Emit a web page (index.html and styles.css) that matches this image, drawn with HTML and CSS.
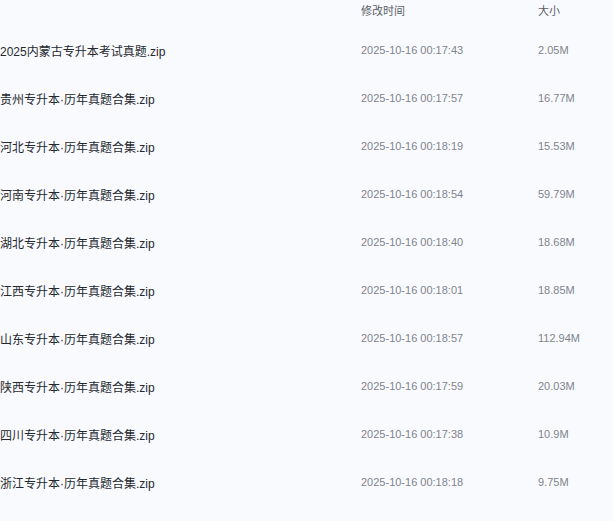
FILE: index.html
```html
<!DOCTYPE html>
<html lang="zh-CN">
<head>
<meta charset="utf-8">
<link rel="stylesheet" href="styles.css">
</head>
<body>
<div class="list">
  <div class="row head">
    <div class="name"></div>
    <div class="date">修改时间</div>
    <div class="size">大小</div>
  </div>
  <div class="row"><div class="name">2025内蒙古专升本考试真题.zip</div><div class="date">2025-10-16 00:17:43</div><div class="size">2.05M</div></div>
  <div class="row"><div class="name">贵州专升本·历年真题合集.zip</div><div class="date">2025-10-16 00:17:57</div><div class="size">16.77M</div></div>
  <div class="row"><div class="name">河北专升本·历年真题合集.zip</div><div class="date">2025-10-16 00:18:19</div><div class="size">15.53M</div></div>
  <div class="row"><div class="name">河南专升本·历年真题合集.zip</div><div class="date">2025-10-16 00:18:54</div><div class="size">59.79M</div></div>
  <div class="row"><div class="name">湖北专升本·历年真题合集.zip</div><div class="date">2025-10-16 00:18:40</div><div class="size">18.68M</div></div>
  <div class="row"><div class="name">江西专升本·历年真题合集.zip</div><div class="date">2025-10-16 00:18:01</div><div class="size">18.85M</div></div>
  <div class="row"><div class="name">山东专升本·历年真题合集.zip</div><div class="date">2025-10-16 00:18:57</div><div class="size">112.94M</div></div>
  <div class="row"><div class="name">陕西专升本·历年真题合集.zip</div><div class="date">2025-10-16 00:17:59</div><div class="size">20.03M</div></div>
  <div class="row"><div class="name">四川专升本·历年真题合集.zip</div><div class="date">2025-10-16 00:17:38</div><div class="size">10.9M</div></div>
  <div class="row"><div class="name">浙江专升本·历年真题合集.zip</div><div class="date">2025-10-16 00:18:18</div><div class="size">9.75M</div></div>
</div>
</body>
</html>
```
FILE: styles.css
```css
html, body {
  margin: 0;
  padding: 0;
  background: #f9fafd;
  height: 100%;
}
body {
  font-family: "Liberation Sans", "Noto Sans CJK SC", sans-serif;
  overflow: hidden;
}
.list {
  display: flex;
  flex-direction: column;
}
.row {
  display: grid;
  grid-template-columns: 361px 177px 1fr;
  height: 48px;
  align-items: center;
  white-space: nowrap;
}
.row.head {
  height: 20px;
  margin-bottom: 6px;
}
.name {
  font-size: 12px;
  color: #252830;
}
.date, .size {
  font-size: 11px;
  color: #80848e;
}
.head .date, .head .size {
  color: #5a5e68;
}
```
